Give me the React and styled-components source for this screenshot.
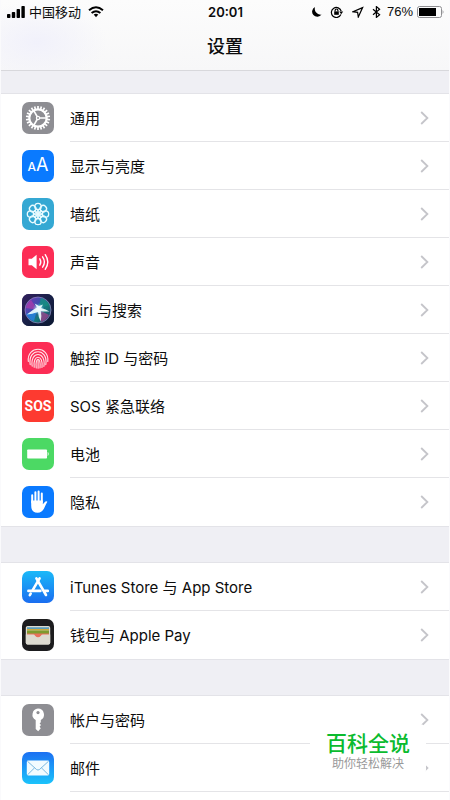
import styled, { createGlobalStyle } from "styled-components";

const rotations = (count) =>
  Array.from({ length: count }, (_, i) => (i * 360) / count);

const GearIcon = () => (
  <svg viewBox="0 0 32 32" fill="none" stroke="#fff">
    {rotations(22).map((a) => (
      <path
        key={a}
        d="M16 3.9v3"
        strokeWidth="1.7"
        transform={`rotate(${a} 16 16)`}
      />
    ))}
    <circle cx="16" cy="16" r="8.7" strokeWidth="2.2" />
    {[90, 210, 330].map((a) => (
      <path
        key={a}
        d="M16 15V7.5"
        strokeWidth="1.7"
        transform={`rotate(${a} 16 16)`}
      />
    ))}
    <circle cx="16" cy="16" r="1.6" strokeWidth="1.2" />
  </svg>
);

const FlowerIcon = () => (
  <svg viewBox="0 0 32 32" fill="none" stroke="#e9fbff" strokeWidth="1.3">
    {rotations(8).map((a) => (
      <circle
        key={a}
        cx="16"
        cy="8.5"
        r="3.2"
        transform={`rotate(${a} 16 16)`}
      />
    ))}
    {rotations(8).map((a) => (
      <circle
        key={a}
        cx="16"
        cy="12.6"
        r="1.8"
        strokeWidth="1"
        transform={`rotate(${a + 22.5} 16 16)`}
      />
    ))}
    <circle cx="16" cy="16" r="1.5" fill="#e9fbff" stroke="none" />
  </svg>
);

const SoundIcon = () => (
  <svg viewBox="0 0 32 32" fill="none" stroke="#fff" strokeLinecap="round">
    <path d="M6.5 12.8h3.3l4.8-4v14.4l-4.8-4H6.5z" fill="#fff" stroke="none" />
    <path d="M17.8 12.8q2 3.2 0 6.4" strokeWidth="1.4" />
    <path d="M20.6 10.8q3.6 5.2 0 10.4" strokeWidth="1.4" />
    <path d="M23.2 8.7q5.2 7.3 0 14.6" strokeWidth="1.4" />
  </svg>
);

const SiriIcon = () => (
  <svg viewBox="0 0 32 32">
    <defs>
      <linearGradient id="siriBack" x1="0" y1="0" x2="1" y2="1">
        <stop offset="0" stopColor="#33205f" />
        <stop offset="0.5" stopColor="#182047" />
        <stop offset="1" stopColor="#0b1830" />
      </linearGradient>
      <linearGradient id="siriOrb" x1="0" y1="0.1" x2="1" y2="0.9">
        <stop offset="0" stopColor="#7b35b5" />
        <stop offset="0.4" stopColor="#394fae" />
        <stop offset="0.65" stopColor="#147a79" />
        <stop offset="1" stopColor="#28356e" />
      </linearGradient>
      <radialGradient id="siriGlow">
        <stop offset="0" stopColor="#fff" />
        <stop offset="0.4" stopColor="#bff2ff" stopOpacity="0.7" />
        <stop offset="1" stopColor="#4ad" stopOpacity="0" />
      </radialGradient>
    </defs>
    <rect width="32" height="32" fill="url(#siriBack)" />
    <circle cx="16" cy="16" r="13" fill="url(#siriOrb)" stroke="#9a8cc4" strokeWidth="0.7" />
    <path d="M16 15 19 3.8Q25 6 27 11z" fill="#159081" opacity="0.8" />
    <path d="M16 16 9 6Q5 9 4 14z" fill="#b03ca9" opacity="0.7" />
    <path d="M17 16 19 28Q25 26 27 21z" fill="#a9408e" opacity="0.7" />
    <path d="M15 16 4 20Q7 26 12 27z" fill="#2684db" opacity="0.85" />
    <circle cx="16.5" cy="15" r="6" fill="url(#siriGlow)" />
    <path
      d="M5 20.5Q11 15.6 15 13.6L12.6 9.4 17 12 21 10.4 19 14Q24 15.4 27.5 17.4Q22 17.9 18.8 17Q20 22 18.7 27.5Q16.2 22.8 16 18Q10 20 5 20.5z"
      fill="#effdff"
      opacity="0.9"
    />
  </svg>
);

const FingerprintIcon = () => (
  <svg viewBox="0 0 32 32" fill="none" stroke="#ffe3e8" strokeWidth="1.1" strokeLinecap="round">
    <path d="M6.3 19.5C4.6 3.2 27.4 3.2 25.8 19.5" />
    <path d="M8.2 22.6C5.6 5.4 26.4 5.4 23.8 22.6" />
    <path d="M10.2 24.2C7.6 8.6 24.4 8.6 21.9 24.4" />
    <path d="M12.2 25.3C10.2 11.8 21.8 11.8 20 25.5" />
    <path d="M14.2 26C12.8 14.3 19.3 14.3 18 26" />
    <path d="M16.1 17.5v8.7" />
  </svg>
);

const BatteryIcon = () => (
  <svg viewBox="0 0 32 32" fill="#fff">
    <rect x="5.2" y="11.4" width="19.8" height="9.2" rx="0.8" />
    <path d="M25.7 13.8q2 2.2 0 4.4z" />
  </svg>
);

const HandIcon = () => (
  <svg viewBox="0 0 32 32" stroke="#fff" fill="none" strokeLinecap="round">
    <path d="M10.2 16.5V9.2M13.4 16V6.2M16.6 16V5.6M19.8 16.5V7.6" strokeWidth="2" />
    <path
      d="M9.2 14.5h11.6v3.7l2.6-2.6q1.4-.8 2 .1-1.4 2.2-2.8 5.5-2.2 5.6-7 5.6-6.4 0-6.4-7z"
      fill="#fff"
      stroke="none"
    />
  </svg>
);

const AppStoreIcon = () => (
  <svg viewBox="0 0 32 32" fill="none" stroke="#fff" strokeWidth="2.6" strokeLinecap="round">
    <path d="M17.6 7.4 10.8 18.9M8.7 22.6l-.9 1.5" />
    <path d="M14.4 7.4 24 24" />
    <path d="M6.4 19.9h12M23 19.9h2.8" />
  </svg>
);

const WalletIcon = () => (
  <svg viewBox="0 0 32 32">
    <rect x="3.8" y="7" width="24.4" height="18.6" rx="1.8" fill="#dddbd1" />
    <path d="M5 8.2h22v2H5z" fill="#5d9fbb" />
    <path d="M5 10h22v1.6H5z" fill="#d0a93a" />
    <path d="M5 11.4h22v4H5z" fill="#7d9b2f" />
    <path d="M5 14.6h22v4H5z" fill="#e8705c" />
    <path
      d="M3.8 15.6h7.6q1 0 1.7 1.2 2.9 3.4 5.8 0 .7-1.2 1.7-1.2h7.6v8.2q0 1.8-1.8 1.8H5.6q-1.8 0-1.8-1.8z"
      fill="#dddbd1"
    />
  </svg>
);

const KeyIcon = () => (
  <svg viewBox="0 0 32 32">
    <path
      d="M16 4.6a6 6 0 0 1 2.8 11.3v2.3l-1.2 1.4 1.4 1.5-1.4 1.6 1.2 1.5-2.6 3-2.5-2.1v-9.2A6 6 0 0 1 16 4.6z"
      fill="#fff"
    />
    <circle cx="16" cy="8.6" r="1.6" fill="#8e8e93" />
  </svg>
);

const MailIcon = () => (
  <svg viewBox="0 0 32 32" stroke="#6bb0dc" strokeWidth="0.9">
    <rect x="4.8" y="8.6" width="22.4" height="14.8" rx="1.4" fill="#f2fbff" stroke="none" />
    <path d="M5.4 9.2 14.4 17.4q1.6 1.4 3.2 0L26.6 9.2" fill="none" />
    <path d="M5.4 22.9 12.6 15.8M26.6 22.9 19.4 15.8" fill="none" />
  </svg>
);

const groups = [
  [
    { label: "通用", color: "#8e8e93", icon: <GearIcon /> },
    { label: "显示与亮度", color: "#0a7aff", text: "size" },
    { label: "墙纸", color: "#35a8d3", icon: <FlowerIcon /> },
    { label: "声音", color: "#fc2d55", icon: <SoundIcon /> },
    { label: "Siri 与搜索", color: "#182047", icon: <SiriIcon /> },
    { label: "触控 ID 与密码", color: "#fc2d55", icon: <FingerprintIcon /> },
    { label: "SOS 紧急联络", color: "#fd3a30", text: "sos" },
    { label: "电池", color: "#4cd964", icon: <BatteryIcon /> },
    { label: "隐私", color: "#0a7aff", icon: <HandIcon /> },
  ],
  [
    {
      label: "iTunes Store 与 App Store",
      color: "linear-gradient(#1bb9f8, #1a6df0)",
      icon: <AppStoreIcon />,
    },
    { label: "钱包与 Apple Pay", color: "#1c1c1e", icon: <WalletIcon /> },
  ],
  [
    { label: "帐户与密码", color: "#8e8e93", icon: <KeyIcon /> },
    {
      label: "邮件",
      color: "linear-gradient(#1c70f2, #1bc3fb)",
      icon: <MailIcon />,
    },
  ],
];

const StatusBar = () => (
  <Status>
    <StatusSide>
      <svg width="18" height="12" viewBox="0 0 18 12">
        <rect x="0" y="8" width="3.4" height="4" rx="0.8" />
        <rect x="4.8" y="6" width="3.4" height="6" rx="0.8" />
        <rect x="9.6" y="3" width="3.4" height="9" rx="0.8" />
        <rect x="14.4" y="0" width="3.4" height="12" rx="0.8" />
      </svg>
      <span>中国移动</span>
      <WifiIcon width="16" height="12" viewBox="0 0 16 12">
        <path d="M1 4.2Q8-1.6 15 4.2" />
        <path d="M3.6 7Q8 3.4 12.4 7" />
        <path d="M5.7 8.5Q8 6.9 10.3 8.5L8 11.2z" className="dot" />
      </WifiIcon>
    </StatusSide>
    <Clock>20:01</Clock>
    <StatusSide $end>
      <svg width="11" height="12" viewBox="0 0 11 12">
        <path d="M4 1A5.2 5.2 0 1 0 10.6 8.6 6 6 0 0 1 4 1z" />
      </svg>
      <LineIcon width="14" height="12" viewBox="0 0 14 12">
        <path d="M10.9 8.6A5 5 0 1 1 11.2 5.2" />
        <path d="M9.2 5.6h4L11.2 8.2z" className="solid" />
        <rect x="4.2" y="5.4" width="4.6" height="3.4" className="solid" />
        <path d="M5.1 5.5V4.4a1.4 1.4 0 0 1 2.8 0v1.1" />
      </LineIcon>
      <LineIcon width="12" height="12" viewBox="0 0 12 12">
        <path d="M10.6 1.6 1 5.7l4.6.7.7 4.6z" />
      </LineIcon>
      <LineIcon width="9" height="12" viewBox="0 0 9 12">
        <path d="M1 3.2 7.6 8.7 4.4 11.4V.6L7.6 3.3 1 8.8" />
      </LineIcon>
      <Percent>76%</Percent>
      <svg width="27" height="12" viewBox="0 0 27 12">
        <rect x="0.5" y="0.5" width="24" height="11" rx="2" fill="none" stroke="#8f8f92" />
        <rect x="2" y="2" width="17" height="8" />
        <path d="M25.6 4q1.8 2 0 4z" fill="#8f8f92" />
      </svg>
    </StatusSide>
  </Status>
);

const SettingRow = ({ item }) => (
  <Row>
    <RowLink href="#">
      <IconTile $color={item.color}>
        {item.icon}
        {item.text === "size" && (
          <SizeMark>
            <small>A</small>A
          </SizeMark>
        )}
        {item.text === "sos" && <SosMark>SOS</SosMark>}
      </IconTile>
      <RowBody>
        <span>{item.label}</span>
        <Chevron width="9" height="14" viewBox="0 0 9 14">
          <path d="M1.2 1 7.4 7l-6.2 6" />
        </Chevron>
      </RowBody>
    </RowLink>
  </Row>
);

const App = () => {
  return (
    <>
      <GlobalStyle />
      <Page>
        <Header>
          <StatusBar />
          <h1>设置</h1>
        </Header>
        <Main>
          {groups.map((group, i) => (
            <Group key={i}>
              {group.map((item) => (
                <SettingRow key={item.label} item={item} />
              ))}
            </Group>
          ))}
        </Main>
        <Watermark>
          <strong>百科全说</strong>
          <span>助你轻松解决</span>
        </Watermark>
      </Page>
    </>
  );
};
export default App;

const GlobalStyle = createGlobalStyle`
  * {
    box-sizing: border-box;
  }
  body {
    margin: 0;
    color: #0c0c0c;
    background-color: #efeff4;
    font-family: Inter, "Noto Sans CJK SC", sans-serif;
  }
`;
const Page = styled.div`
  min-height: 100vh;
  display: flex;
  flex-direction: column;
  border: solid #fafafc;
  border-width: 0 1px;
`;
const Header = styled.header`
  border-bottom: 1px solid #d8d8dc;
  background: radial-gradient(
      ellipse 70px 40px at 36px 42px,
      #f1f1fb,
      transparent
    ),
    linear-gradient(#fcfcfc, #f7f7f8);
  h1 {
    margin: 0;
    height: 46px;
    line-height: 46px;
    text-align: center;
    font-size: 18px;
    font-weight: 500;
  }
`;
const Status = styled.div`
  height: 24px;
  padding: 0 5px 0 6px;
  display: grid;
  grid-template-columns: 1fr auto 1fr;
  align-items: center;
  font-size: 13px;
  line-height: 24px;
`;
const StatusSide = styled.div`
  display: flex;
  align-items: center;
  gap: 4px;
  justify-content: ${(props) => (props.$end ? "flex-end" : "flex-start")};
  svg {
    flex: none;
  }
  svg + svg {
    margin-left: 4px;
  }
`;
const Clock = styled.span`
  font-weight: 600;
`;
const Percent = styled.span`
  margin-left: 2px;
  font-family: "Liberation Sans", sans-serif;
`;
const WifiIcon = styled.svg`
  margin-left: 3px;
  fill: none;
  stroke: #000;
  stroke-width: 2;
  .dot {
    fill: #000;
    stroke: none;
  }
`;
const LineIcon = styled.svg`
  fill: none;
  stroke: #000;
  stroke-width: 1.2;
  .solid {
    fill: #000;
    stroke: none;
  }
`;
const Main = styled.main`
  flex: 1;
  display: flex;
  flex-direction: column;
  gap: 37px;
  padding-top: 23px;
`;
const Group = styled.ul`
  margin: 0;
  padding: 0;
  list-style: none;
  background-color: #fff;
  box-shadow: 0 -1px #e3e3e8, 0 1px #e3e3e8;
  &:last-child {
    flex: 1;
  }
`;
const Row = styled.li`
  ${Group}:not(:last-child) &:last-child > a > span {
    border-bottom-color: transparent;
  }
`;
const RowLink = styled.a`
  height: 48px;
  padding-left: 21px;
  display: flex;
  align-items: center;
  gap: 16px;
  color: inherit;
  text-decoration: none;
`;
const IconTile = styled.span`
  width: 32px;
  height: 32px;
  flex: none;
  display: flex;
  align-items: center;
  justify-content: center;
  overflow: hidden;
  border-radius: 7px;
  color: #fff;
  background: ${(props) => props.$color};
  svg {
    width: 32px;
    height: 32px;
  }
`;
const SizeMark = styled.span`
  font-size: 18px;
  line-height: 32px;
  small {
    font-size: 12px;
    font-weight: 500;
  }
`;
const SosMark = styled.span`
  font-family: Roboto, sans-serif;
  font-size: 14px;
  font-weight: 700;
`;
const RowBody = styled.span`
  flex: 1;
  height: 48px;
  padding-right: 20px;
  display: flex;
  align-items: center;
  justify-content: space-between;
  border-bottom: 1px solid #e4e4e7;
  font-size: 15px;
`;
const Chevron = styled.svg`
  fill: none;
  stroke: #c5c5ca;
  stroke-width: 1.8;
`;
const Watermark = styled.div`
  position: fixed;
  right: 24px;
  bottom: 24px;
  padding: 8px 16px 4px;
  display: flex;
  flex-direction: column;
  align-items: center;
  border-radius: 6px;
  background-color: #fff;
  strong {
    color: #0bbb2f;
    font-size: 21px;
    line-height: 24px;
    font-weight: 500;
  }
  span {
    color: #999;
    font-size: 12px;
    line-height: 16px;
  }
`;
